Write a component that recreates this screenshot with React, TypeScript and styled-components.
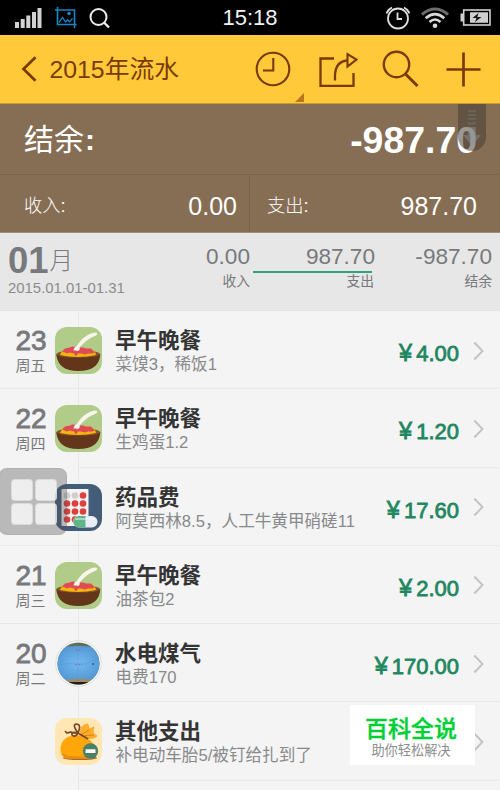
import React from 'react';
import styled, { createGlobalStyle } from 'styled-components';

const GlobalStyle = createGlobalStyle`
  * { box-sizing: border-box; }
  body {
    margin: 0;
    background: #f4f4f4;
    font-family: "Liberation Sans", "Noto Sans CJK SC", sans-serif;
  }
  svg { display: block; flex: none; }
`;

const Screen = styled.div`
  position: relative;
  width: 500px;
  height: 790px;
  overflow: hidden;
  background: #f4f4f4;
`;

const StatusBar = styled.div`
  display: grid;
  grid-template-columns: 1fr auto 1fr;
  align-items: center;
  height: 35px;
  padding: 0 9px 0 15px;
  background: #000;
`;

const StatusGroup = styled.div<{ $end?: boolean }>`
  display: flex;
  align-items: center;
  gap: ${p => (p.$end ? '11px' : '12.5px')};
  justify-content: ${p => (p.$end ? 'flex-end' : 'flex-start')};
`;

const Clock = styled.div`
  font-size: 22px;
  line-height: 34px;
  color: #f2f2f2;
  margin-right: 6px;
`;

const Header = styled.header`
  display: flex;
  align-items: center;
  height: 69px;
  padding-left: 21px;
  background: #ffc93a;
  border-bottom: 1px solid #c99a35;
  color: #7a3a05;
`;

const HeaderTitle = styled.h1`
  flex: 1;
  margin: 2px 0 0 12.5px;
  font-size: 24.8px;
  line-height: 30px;
  font-weight: 400;
`;

const Actions = styled.div`
  position: relative;
  display: flex;
  align-items: center;
  height: 69px;
  padding-right: 19px;
`;

const Action = styled.div<{ $gap: number }>`
  margin-right: ${p => p.$gap}px;
`;

const DropMark = styled.i`
  position: absolute;
  left: 40px;
  bottom: 2px;
  border-left: 9px solid transparent;
  border-bottom: 9px solid #b8771c;
`;

const Balance = styled.section`
  display: flex;
  align-items: center;
  justify-content: space-between;
  height: 71px;
  padding: 2px 23px 0 24px;
  background: #866e54;
  border-bottom: 1px solid #7c644b;
  color: #fff;
`;

const BalanceLabel = styled.span`
  font-size: 30px;
  line-height: 40px;
`;

const LabelColon = styled.span<{ $bold?: boolean }>`
  margin-left: ${p => (p.$bold ? '1px' : '0')};
  font-weight: ${p => (p.$bold ? 700 : 400)};
`;

const BalanceValue = styled.span`
  font-size: 37.4px;
  line-height: 40px;
  font-weight: 700;
`;

const Totals = styled.section`
  display: grid;
  grid-template-columns: 250px 250px;
  height: 58px;
  background: #866e54;
  border-bottom: 1px solid #a08b76;
  color: #fff;
`;

const Total = styled.div<{ $last?: boolean }>`
  display: flex;
  align-items: center;
  justify-content: space-between;
  padding: ${p => (p.$last ? '4px 23px 0 17px' : '4px 12px 0 24px')};
  border-right: ${p => (p.$last ? '0' : '1px solid #7c644b')};
`;

const TotalLabel = styled.span`
  font-size: 18.3px;
  line-height: 26px;
  font-weight: 300;
`;

const TotalValue = styled.span`
  font-size: 25px;
  line-height: 26px;
`;

const Month = styled.section`
  display: grid;
  grid-template-columns: 150px 100px 125px 117px;
  height: 78px;
  background: #e7e7e7;
  border-bottom: 1px solid #e2e2e2;
  color: #77797c;
`;

const MonthName = styled.div`
  padding: 9px 0 0 8px;
`;

const MonthNumber = styled.div`
  display: flex;
  font-size: 36.5px;
  line-height: 38px;
  height: 37px;
  font-weight: 700;
`;

const MonthUnit = styled.span`
  margin-left: 1px;
  font-size: 23.5px;
  font-weight: 300;
`;

const Range = styled.div`
  font-size: 14.9px;
  line-height: 18px;
  color: #8b8c8e;
`;

const Figure = styled.div`
  display: flex;
  flex-direction: column;
  align-items: flex-end;
  padding-top: 11px;
  font-size: 22.6px;
  line-height: 26px;
`;

const FigureLabel = styled.span<{ $active?: boolean }>`
  width: 119px;
  max-width: 100%;
  margin-right: ${p => (p.$active ? '3px' : '0')};
  margin-top: 1px;
  border-top: 2px solid ${p => (p.$active ? '#2fa27c' : 'transparent')};
  font-size: 13.8px;
  line-height: 18px;
  text-align: right;
  text-indent: ${p => (p.$active ? '2px' : '0')};
  white-space: nowrap;
`;

const FigureCaption = styled.span<{ $active?: boolean }>`
  margin-right: ${p => (p.$active ? '-2px' : '0')};
`;

const Row = styled.article`
  display: flex;
  height: 78.25px;
`;

const Day = styled.div<{ $joined: boolean }>`
  width: 78px;
  flex: none;
  padding: 14px 0 0 15.5px;
  border-bottom: 1px solid ${p => (p.$joined ? 'transparent' : '#e9e9e9')};
  color: #77797c;
`;

const DayNumber = styled.div`
  font-size: 28px;
  line-height: 32px;
  -webkit-text-stroke: 0.8px #77797c;
`;

const Weekday = styled.div`
  font-size: 15px;
  line-height: 18px;
`;

const Entry = styled.div`
  flex: 1;
  display: flex;
  border-left: 1px solid #e9e9e9;
  border-bottom: 1px solid #e9e9e9;
`;

const Category = styled.div`
  position: relative;
  margin: 16px 13px 0 -24px;
  height: 47px;
`;

const Detail = styled.div`
  flex: 1;
  padding-top: 17px;
  white-space: nowrap;
`;

const DetailTitle = styled.div`
  font-size: 21.5px;
  line-height: 27px;
  font-weight: 700;
  color: #343434;
`;

const Note = styled.div`
  margin-top: -1px;
  padding-left: 0.5px;
  font-size: 16.6px;
  line-height: 21px;
  color: #88898b;
`;

const Amount = styled.div`
  display: flex;
  align-items: baseline;
  gap: 4px;
  padding-top: 29px;
  margin-right: 14px;
  font-size: 22px;
  line-height: 27px;
  color: #1f8760;
  -webkit-text-stroke: 0.8px #1f8760;
`;

const Yen = styled.span`
  font-size: 23.5px;
`;

const Arrow = styled.div`
  width: 27px;
  padding-top: 29.5px;
`;

const TouchPad = styled.div`
  position: absolute;
  left: -1px;
  top: 468px;
  width: 68px;
  height: 67px;
  display: grid;
  grid-template-columns: 22px 22px;
  grid-template-rows: 22px 22px;
  gap: 2px;
  place-content: center;
  padding-left: 2px;
  border-radius: 8px;
  background: rgba(80, 80, 80, 0.36);
  border: 1.5px solid rgba(120, 120, 120, 0.12);
`;

const PadKey = styled.i`
  border-radius: 4px;
  background: rgba(255, 255, 255, 0.76);
  border: 1px solid rgba(205, 205, 205, 0.6);
`;

const PullTab = styled.div`
  position: absolute;
  left: 458px;
  top: 104px;
  width: 28px;
  height: 47px;
  border-radius: 0 0 14px 14px;
  background: rgba(65, 60, 50, 0.52);
`;

const Badge = styled.aside`
  position: absolute;
  left: 350px;
  top: 705px;
  width: 125px;
  height: 60px;
  padding: 11px 3px 0 0;
  background: #fff;
  text-align: center;
`;

const BadgeName = styled.div`
  font-size: 23px;
  line-height: 27px;
  font-weight: 500;
  color: #00cf35;
  -webkit-text-stroke: 0.4px #00cf35;
`;

const BadgeLine = styled.div`
  font-size: 13.2px;
  line-height: 16px;
  color: #8d8d8d;
`;

const SignalIcon = () => (
  <svg width="27" height="21" viewBox="0 0 27 21" fill="#d2d2d2">
    <path d="M0 15h4v6H0zM5.700 12h4v9h-4zM11.300 8.500h4V21h-4zM17 5h4v16h-4zM22.500 1h4v20h-4z" />
  </svg>
);

const CropIcon = () => (
  <svg width="22" height="21" viewBox="0 0 22 21" fill="none" stroke="#1687c9" strokeWidth="1.600">
    <path d="M2.500 0v17.500H21.500M0 3h19.500V21" />
    <path d="M4 15.500l3.500-5 3 4.500 2-2.200 2 2 3-3.500" strokeWidth="1.300" />
    <circle cx="14" cy="6.500" r="1.800" fill="#1687c9" stroke="none" />
  </svg>
);

const StatusSearchIcon = () => (
  <svg width="22" height="22" viewBox="0 0 22 22" fill="none" stroke="#eee" strokeWidth="2">
    <circle cx="9.500" cy="10" r="8" />
    <path d="M15 15.500l5 5" strokeWidth="2.400" />
  </svg>
);

const AlarmIcon = () => (
  <svg width="25" height="24" viewBox="0 0 25 24" fill="none" stroke="#dedede" strokeWidth="1.800">
    <circle cx="13" cy="12.500" r="10" />
    <path d="M12.500 6.500V13h4.500M1.500 7.500Q3 3.300 7 1.500M24.500 7.500Q23 3.300 19 1.500" />
  </svg>
);

const WifiIcon = () => (
  <svg width="28" height="22" viewBox="0 0 28 22" fill="none" strokeWidth="3">
    <path d="M1 7.500Q14-3.500 27 7.500" stroke="#6d6d6d" />
    <path d="M4.700 11.200Q14 3 23.300 11.200M8.500 15Q14 10 19.500 15" stroke="#dadada" strokeWidth="2.600" />
    <circle cx="14" cy="18.700" r="2.300" fill="#dadada" />
  </svg>
);

const BatteryIcon = () => (
  <svg width="31" height="17" viewBox="0 0 31 17">
    <rect x="3.700" y="1" width="26.300" height="15" fill="none" stroke="#d0d0d0" strokeWidth="1.600" />
    <path d="M0.500 4.500H3v8H.5zM10 3.200h18v10.600H10z" fill="#d0d0d0" />
    <path d="M18.500 4l-6 5h4l-1.500 4 6.500-5h-4.200z" fill="#151515" />
  </svg>
);

const BackIcon = () => (
  <svg width="16" height="26" viewBox="0 0 16 26" fill="none" stroke="#7a3a05" strokeWidth="2.700">
    <path d="M14.500 1.200L2.500 13l12 11.800" />
  </svg>
);

const HistoryIcon = () => (
  <svg width="36" height="36" viewBox="0 0 36 36" fill="none" stroke="#7a3a05" strokeWidth="2.100">
    <circle cx="18" cy="18" r="16.300" />
    <path d="M18.300 7v12.500H8" />
  </svg>
);

const ShareIcon = () => (
  <svg width="40" height="36" viewBox="0 0 40 36" fill="none" stroke="#7a3a05" strokeWidth="2.300">
    <path d="M16 7.500H2.500v27.300H35.500V22M17 29.500v-5Q17.500 10.500 29 9.500" />
    <path d="M29.500 3v12.500l9-7z" strokeWidth="2.100" />
  </svg>
);

const SearchIcon = () => (
  <svg width="37" height="38" viewBox="0 0 37 38" fill="none" stroke="#7a3a05" strokeWidth="2.400">
    <circle cx="14.500" cy="14.500" r="12.700" />
    <path d="M23.500 24l12 12" strokeWidth="3" />
  </svg>
);

const PlusIcon = () => (
  <svg width="35" height="35" viewBox="0 0 35 35" fill="none" stroke="#7a3a05" strokeWidth="2.700">
    <path d="M17.500 .5v34M.5 17.500h34" />
  </svg>
);

const PullArrow = () => (
  <svg width="28" height="47" viewBox="0 0 28 47" fill="#8e949a" opacity=".65">
    <path d="M10 6h8v2h-8zM10 10h8v2h-8zM10 14h8v2h-8zM10 18h8v3h-8z" opacity=".35" />
    <path d="M10 23h8v8h5l-9 11-9-11h5z" opacity=".7" />
  </svg>
);

const BowlIcon = () => (
  <svg width="47" height="47" viewBox="0 0 47 47">
    <rect width="47" height="47" rx="12" fill="#b1cb89" />
    <ellipse cx="23.300" cy="27.500" rx="22" ry="4.700" fill="#84542f" />
    <path d="M5 28l2-4 6-2.500h22l5 3 1 3.500q-18 4-36 0z" fill="#f5b60b" />
    <path d="M7 24.500l3-3 5-1q3-2 6 0l7 0 3 1 5 0 4 4-3 1-4 0-3 1-4-1-3 0-2 3-2-3-4-1-3 1-2-1z" fill="#df4b55" />
    <path d="M1.300 27.500q3 2 6 2.200 16 1.800 32 0 3-.3 6-2.200Q44 44 23.300 44 3 44 1.300 27.500z" fill="#63351a" />
    <path d="M18.500 23.500Q19 20 21.500 19.500 26 12 32 8.500 39 4.500 42 6 43 7.500 40 9 33 11 24.500 20.500q1 2-1.500 3.500l-2-.5z" fill="#faf5ec" />
  </svg>
);

const MedicineIcon = () => (
  <svg width="47" height="47" viewBox="0 0 47 47">
    <rect width="47" height="47" rx="12" fill="#435d79" />
    <rect x="6.500" y="5" width="27" height="37" rx="1" fill="#f6f3f3" />
    {[11.500, 19.500, 27.500, 35.500].map((y, r) =>
      [12, 20, 28].map((x, c) => (
        <circle key={`${r}-${c}`} cx={x} cy={y} r="3.300" fill={r === 0 && c < 2 ? '#d0cece' : '#de3f3c'} />
      ))
    )}
    <rect x="18" y="32" width="24.500" height="11.500" rx="5.700" fill="#e7eef9" />
    <path d="M30.500 32H24a5.750 5.750 0 0 0 0 11.500h6.500z" fill="#5fb489" />
    <path d="M21 35h18" stroke="#fff" strokeWidth="2" opacity=".45" strokeLinecap="round" />
  </svg>
);

const MeterIcon = () => (
  <svg width="47" height="47" viewBox="0 0 47 47">
    <defs>
      <clipPath id="meter"><circle cx="23.500" cy="23.500" r="21" /></clipPath>
      <radialGradient id="sky"><stop stopColor="#72b9f0" /><stop offset="1" stopColor="#559ad6" /></radialGradient>
    </defs>
    <circle cx="23.500" cy="23.500" r="22.800" fill="#f8f8f8" stroke="#dedede" />
    <g clipPath="url(#meter)">
      <rect width="47" height="47" fill="#5e705c" />
      <path d="M0 8q23-4 47 0v31q-24 3-47 0z" fill="url(#sky)" />
      <path d="M10 40q14-2 28 0v2H10z" fill="#a08a60" />
      <path d="M10 42h28v5H10z" fill="#211d1b" />
      <path d="M23 7v32M4 25l14-2 12 1 13-5" stroke="#478dce" fill="none" opacity=".25" />
      <path d="M20 10h7M20 24.500h7" stroke="#8878bd" strokeWidth="1.500" strokeDasharray="2 1" />
      <circle cx="38" cy="24" r="1" fill="#315684" />
    </g>
  </svg>
);

const BagIcon = () => (
  <svg width="47" height="47" viewBox="0 0 47 47">
    <rect width="47" height="47" rx="12" fill="#ffe6b3" />
    <ellipse cx="25" cy="40" rx="17" ry="2" fill="#a76a2b" />
    <path d="M23 17Q8 17 5.500 29q-1 11 8 11.500h22q8-1 5-10-3-9-11-11z" fill="#ffa60a" />
    <path d="M7 35q7 5 25 3l4 2.500H13q-5 0-6-5.500z" fill="#ed8c0d" />
    <path d="M25 17q0-11 8-11l1 5 5-2-1 6 4 3q-3 4-16 2z" fill="#ffae28" stroke="#f09a28" strokeWidth=".6" />
    <path d="M26 17l8-5M26 18l13-1" stroke="#dd8023" strokeWidth="1" />
    <path d="M23 15Q17 7 21 6q6 0 2 9-7-2-6 2 3 3 6-2l10 6M22 15q-5 0-6-1l-4 1-2-2" fill="none" stroke="#764522" strokeWidth="1.600" />
    <circle cx="35.500" cy="33" r="7.700" fill="#4c8064" />
    <rect x="30.500" y="31.200" width="10" height="3.800" rx=".6" fill="#fff" />
  </svg>
);

const ChevronIcon = () => (
  <svg width="12" height="20" viewBox="0 0 12 20" fill="none" stroke="#c3c3c3" strokeWidth="1.900">
    <path d="M1.300 1.500L9.500 10l-8.200 8.500" />
  </svg>
);

const icons = { bowl: BowlIcon, medicine: MedicineIcon, utility: MeterIcon, bag: BagIcon };

type Item = {
  day?: string;
  week?: string;
  icon: keyof typeof icons;
  title: string;
  note: string;
  amount?: string;
  joined?: boolean;
};

const items: Item[] = [
  { day: '23', week: '周五', icon: 'bowl', title: '早午晚餐', note: '菜馍3，稀饭1', amount: '4.00' },
  { day: '22', week: '周四', icon: 'bowl', title: '早午晚餐', note: '生鸡蛋1.2', amount: '1.20', joined: true },
  { icon: 'medicine', title: '药品费', note: '阿莫西林8.5，人工牛黄甲硝磋11', amount: '17.60' },
  { day: '21', week: '周三', icon: 'bowl', title: '早午晚餐', note: '油茶包2', amount: '2.00' },
  { day: '20', week: '周二', icon: 'utility', title: '水电煤气', note: '电费170', amount: '170.00', joined: true },
  { icon: 'bag', title: '其他支出', note: '补电动车胎5/被钉给扎到了', joined: true },
  { icon: 'bag', title: '', note: '' },
];

const LedgerRow = ({ item }: { item: Item }) => {
  const Icon = icons[item.icon];
  return (
    <Row>
      <Day $joined={!!item.joined}>
        <DayNumber>{item.day}</DayNumber>
        <Weekday>{item.week}</Weekday>
      </Day>
      <Entry>
        {item.title && (
          <>
            <Category><Icon /></Category>
            <Detail>
              <DetailTitle>{item.title}</DetailTitle>
              <Note>{item.note}</Note>
            </Detail>
            {item.amount && <Amount><Yen>¥</Yen>{item.amount}</Amount>}
            <Arrow><ChevronIcon /></Arrow>
          </>
        )}
      </Entry>
    </Row>
  );
};

export default function App() {
  return (
    <Screen>
      <GlobalStyle />
      <StatusBar>
        <StatusGroup><SignalIcon /><CropIcon /><StatusSearchIcon /></StatusGroup>
        <Clock>15:18</Clock>
        <StatusGroup $end><AlarmIcon /><WifiIcon /><BatteryIcon /></StatusGroup>
      </StatusBar>
      <Header>
        <BackIcon />
        <HeaderTitle>2015年流水</HeaderTitle>
        <Actions>
          <Action $gap={27}><HistoryIcon /></Action>
          <Action $gap={24}><ShareIcon /></Action>
          <Action $gap={27}><SearchIcon /></Action>
          <PlusIcon />
          <DropMark />
        </Actions>
      </Header>
      <Balance>
        <BalanceLabel>结余<LabelColon $bold>:</LabelColon></BalanceLabel>
        <BalanceValue>-987.70</BalanceValue>
      </Balance>
      <Totals>
        <Total><TotalLabel>收入:</TotalLabel><TotalValue>0.00</TotalValue></Total>
        <Total $last><TotalLabel>支出:</TotalLabel><TotalValue>987.70</TotalValue></Total>
      </Totals>
      <Month>
        <MonthName>
          <MonthNumber>01<MonthUnit>月</MonthUnit></MonthNumber>
          <Range>2015.01.01-01.31</Range>
        </MonthName>
        <Figure>0.00<FigureLabel>收入</FigureLabel></Figure>
        <Figure>987.70<FigureLabel $active><FigureCaption $active>支出</FigureCaption></FigureLabel></Figure>
        <Figure>-987.70<FigureLabel>结余</FigureLabel></Figure>
      </Month>
      {items.map((item, i) => <LedgerRow key={i} item={item} />)}
      <TouchPad><PadKey /><PadKey /><PadKey /><PadKey /></TouchPad>
      <PullTab><PullArrow /></PullTab>
      <Badge>
        <BadgeName>百科全说</BadgeName>
        <BadgeLine>助你轻松解决</BadgeLine>
      </Badge>
    </Screen>
  );
}
